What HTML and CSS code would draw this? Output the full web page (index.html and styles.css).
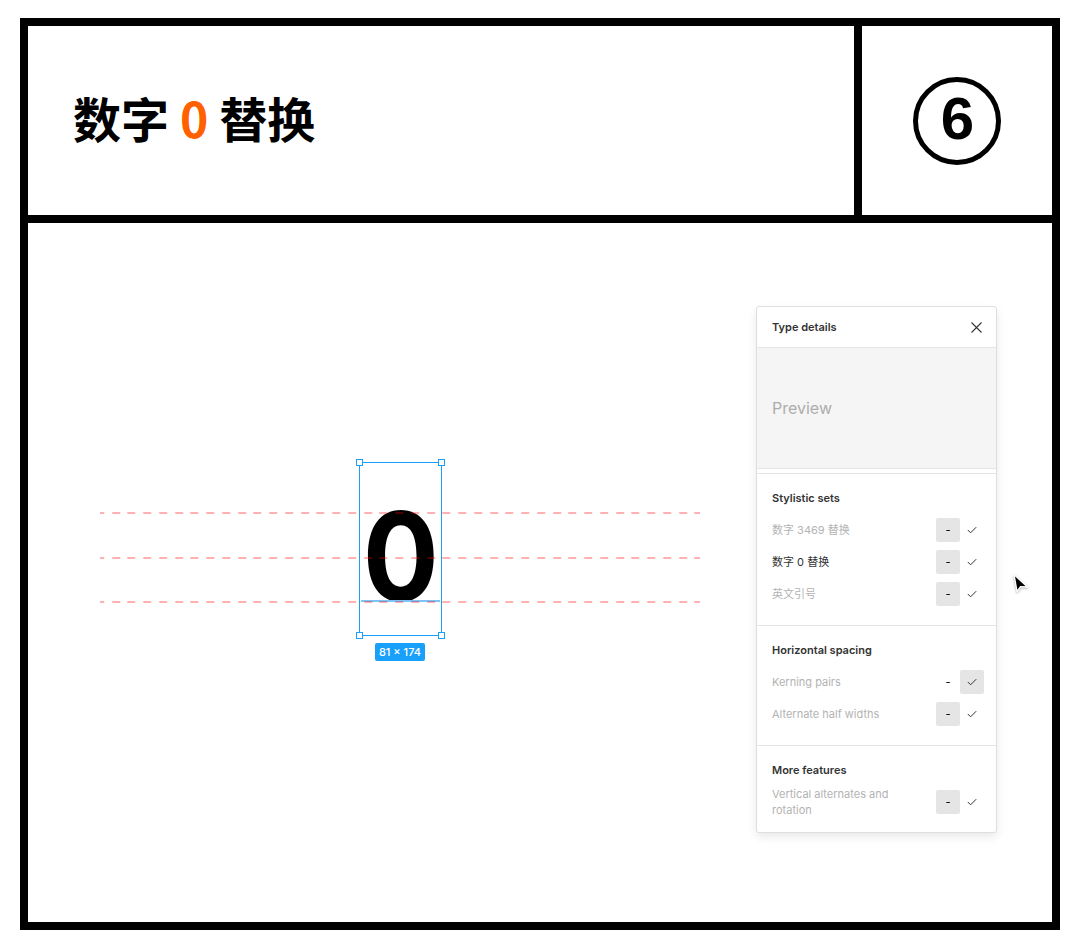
FILE: index.html
```html
<!DOCTYPE html>
<html lang="zh">
<head>
    <meta charset="UTF-8">
    <meta name="viewport" content="width=device-width, initial-scale=1.0">
    <title>数字 0 替换</title>
    <link rel="stylesheet" href="styles.css">
</head>
<body>
    <div class="frame">
        <div class="title-cell">
            <h1 class="title">数字 <span class="accent">0</span> 替换</h1>
        </div>
        <div class="badge-cell">
            <svg class="badge" width="88" height="88" viewBox="0 0 88 88">
                <circle cx="44" cy="44" r="41.5" fill="none" stroke="#000" stroke-width="5"/>
                <text x="44.5" y="62" text-anchor="middle" class="badge-num">6</text>
            </svg>
        </div>

        <div class="stage">
            <!-- free canvas: guides, glyph and its selection -->
            <div class="canvas">
                <div class="guide guide-ascent"></div>
                <div class="guide guide-middle"></div>
                <div class="guide guide-base"></div>
                <div class="glyph">0</div>
                <div class="baseline"></div>
                <div class="selection">
                    <span class="handle handle-tl"></span>
                    <span class="handle handle-tr"></span>
                    <span class="handle handle-bl"></span>
                    <span class="handle handle-br"></span>
                </div>
                <div class="size-tag">81 × 174</div>
            </div>

            <aside class="panel">
                <div class="panel-head">
                    <span class="panel-title">Type details</span>
                    <svg class="close" width="11" height="11" viewBox="0 0 11 11">
                        <path d="M0.5 0.5 L10.5 10.5 M10.5 0.5 L0.5 10.5" stroke="#333" stroke-width="1.1" fill="none"/>
                    </svg>
                </div>
                <div class="preview">Preview</div>

                <div class="section">
                    <div class="section-title">Stylistic sets</div>
                    <div class="row">
                        <span class="row-label">数字 3469 替换</span>
                        <span class="toggle on">-</span>
                        <span class="toggle"><svg class="check" width="10" height="8" viewBox="0 0 10 8"><path d="M0.8 4 L3.6 6.8 L9.2 1.2" stroke="#333" fill="none"/></svg></span>
                    </div>
                    <div class="row">
                        <span class="row-label active">数字 0 替换</span>
                        <span class="toggle on">-</span>
                        <span class="toggle"><svg class="check" width="10" height="8" viewBox="0 0 10 8"><path d="M0.8 4 L3.6 6.8 L9.2 1.2" stroke="#333" fill="none"/></svg></span>
                    </div>
                    <div class="row">
                        <span class="row-label">英文引号</span>
                        <span class="toggle on">-</span>
                        <span class="toggle"><svg class="check" width="10" height="8" viewBox="0 0 10 8"><path d="M0.8 4 L3.6 6.8 L9.2 1.2" stroke="#333" fill="none"/></svg></span>
                    </div>
                </div>

                <div class="section">
                    <div class="section-title">Horizontal spacing</div>
                    <div class="row">
                        <span class="row-label">Kerning pairs</span>
                        <span class="toggle">-</span>
                        <span class="toggle on"><svg class="check" width="10" height="8" viewBox="0 0 10 8"><path d="M0.8 4 L3.6 6.8 L9.2 1.2" stroke="#333" fill="none"/></svg></span>
                    </div>
                    <div class="row">
                        <span class="row-label">Alternate half widths</span>
                        <span class="toggle on">-</span>
                        <span class="toggle"><svg class="check" width="10" height="8" viewBox="0 0 10 8"><path d="M0.8 4 L3.6 6.8 L9.2 1.2" stroke="#333" fill="none"/></svg></span>
                    </div>
                </div>

                <div class="section section-last">
                    <div class="section-title">More features</div>
                    <div class="row">
                        <span class="row-label wrap">Vertical alternates and rotation</span>
                        <span class="toggle on">-</span>
                        <span class="toggle"><svg class="check" width="10" height="8" viewBox="0 0 10 8"><path d="M0.8 4 L3.6 6.8 L9.2 1.2" stroke="#333" fill="none"/></svg></span>
                    </div>
                </div>
            </aside>

            <svg class="cursor" width="20" height="22" viewBox="0 0 20 22">
                <path d="M2 1.5 L5 18.5 L8.6 13.6 L15.5 14 Z" fill="#000" stroke="#fff" stroke-width="1.4" stroke-linejoin="round"/>
            </svg>
        </div>
    </div>
</body>
</html>
```

FILE: styles.css
```css
body {
    margin: 0;
    background: #fff;
    font-family: Inter, "Noto Sans CJK SC", sans-serif;
}

.frame {
    box-sizing: border-box;
    width: 1040px;
    height: 912px;
    margin: 18px 0 0 20px;
    border: 8px solid #000;
    background: #000;
    display: grid;
    grid-template-columns: 1fr 190px;
    grid-template-rows: 189px 1fr;
    gap: 8px;
}

.title-cell {
    background: #fff;
    display: flex;
    align-items: center;
    padding: 0 0 8px 45px;
}

.title {
    margin: 0;
    font-family: "Noto Sans CJK SC", sans-serif;
    font-size: 48px;
    font-weight: 700;
    line-height: 1;
    color: #000;
}

.accent {
    color: #ff6000;
}

.badge-cell {
    background: #fff;
    display: flex;
    align-items: center;
    justify-content: center;
}

.badge-num {
    font-family: "Liberation Sans", Arial, sans-serif;
    font-size: 60px;
    font-weight: 700;
    fill: #000;
}

.stage {
    grid-column: 1 / -1;
    background: #fff;
    position: relative;
    display: flex;
    justify-content: flex-end;
    align-items: flex-start;
    padding: 83px 55px 0 0;
}

/* canvas layer */
.canvas {
    position: absolute;
    inset: 0;
}

.guide {
    position: absolute;
    left: 72px;
    width: 600px;
    height: 2px;
    background: repeating-linear-gradient(90deg, rgba(255, 0, 0, 0.3) 0 8px, transparent 8px 15.75px);
    background-position: -3.75px 0;
    z-index: 2;
}

.guide-ascent { top: 289px; }
.guide-middle { top: 334px; }
.guide-base { top: 378px; }

.glyph {
    position: absolute;
    left: 331px;
    top: 271px;
    width: 83px;
    text-align: center;
    font-family: Inter, sans-serif;
    font-size: 124px;
    font-weight: 700;
    line-height: 1;
    color: #000;
    transform: scaleX(0.91);
}

.baseline {
    position: absolute;
    left: 333px;
    top: 377px;
    width: 79px;
    height: 2px;
    background: #7cc4f8;
    z-index: 1;
}

.selection {
    position: absolute;
    left: 331px;
    top: 239px;
    width: 81px;
    height: 172px;
    border: 1px solid #18a0fb;
}

.handle {
    position: absolute;
    width: 5px;
    height: 5px;
    background: #fff;
    border: 1px solid #18a0fb;
}

.handle-tl { left: -4px; top: -4px; }
.handle-tr { right: -4px; top: -4px; }
.handle-bl { left: -4px; bottom: -4px; }
.handle-br { right: -4px; bottom: -4px; }

.size-tag {
    position: absolute;
    left: 347px;
    top: 420px;
    width: 50px;
    height: 18px;
    border-radius: 2px;
    background: #18a0fb;
    color: #fff;
    font-size: 11px;
    font-weight: 500;
    line-height: 18px;
    text-align: center;
}

/* type details panel */
.panel {
    position: relative;
    z-index: 3;
    box-sizing: border-box;
    width: 241px;
    background: #fff;
    border: 1px solid #dedede;
    border-radius: 3px;
    box-shadow: 0 4px 10px rgba(0, 0, 0, 0.09);
    font-size: 11px;
    color: #333;
}

.panel-head {
    height: 40px;
    display: flex;
    align-items: center;
    justify-content: space-between;
    padding: 0 14px 0 15px;
    border-bottom: 1px solid #e5e5e5;
}

.panel-title {
    font-weight: 600;
}

.preview {
    height: 120px;
    display: flex;
    align-items: center;
    padding-left: 15px;
    background: #f5f5f5;
    border-bottom: 1px solid #e5e5e5;
    font-size: 16px;
    color: #adadad;
}

.section {
    padding: 16px 12px 15px 15px;
    border-top: 1px solid #e5e5e5;
    display: flex;
    flex-direction: column;
}

.preview + .section {
    margin-top: 4px;
}

.section-last {
    padding-bottom: 14px;
}

.section-title {
    line-height: 16px;
    font-weight: 600;
    margin-bottom: 8px;
}

.row {
    display: flex;
    align-items: center;
    min-height: 32px;
}

.row-label {
    flex: 1;
    line-height: 16px;
    color: #b3b3b3;
}

.row-label.active {
    color: #333;
}

.row-label.wrap {
    padding-right: 40px;
}

.toggle {
    width: 24px;
    height: 24px;
    display: flex;
    align-items: center;
    justify-content: center;
    border-radius: 2px;
    color: #000;
}

.toggle.on {
    background: #e5e5e5;
}

.cursor {
    position: absolute;
    left: 984px;
    top: 350px;
    z-index: 4;
    filter: drop-shadow(0 1px 1px rgba(0, 0, 0, 0.3));
}
```
